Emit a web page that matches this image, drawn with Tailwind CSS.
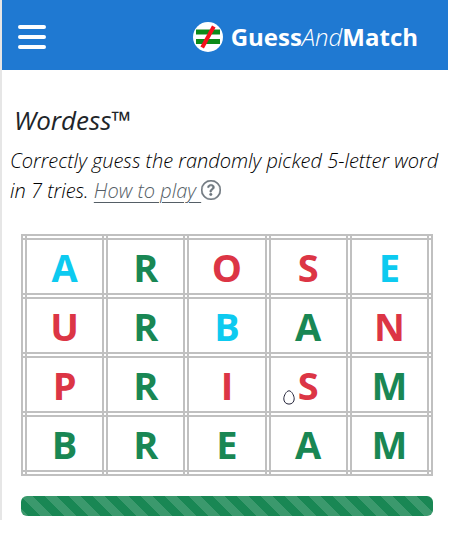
<!DOCTYPE html>
<html lang="en">
<head>
    <meta charset="UTF-8">
    <meta name="viewport" content="width=device-width, initial-scale=1.0">
    <title>Wordess - GuessAndMatch</title>
    <script src="https://cdn.jsdelivr.net/npm/@tailwindcss/browser@4"></script>
</head>
<body class="bg-white font-['Open_Sans','Noto_Sans',sans-serif] text-[#212529]">

    <div class="border-l-2 border-[#e6e6e6] mr-px pb-1">

        <!-- Header -->
        <header class="bg-[#1f79d2] h-[70px] flex items-center justify-between pl-4 pr-[30px] pt-1">
            <button type="button" aria-label="Menu" class="text-white">
                <svg class="w-7 h-6" viewBox="0 0 28 24" fill="none" stroke="currentColor" stroke-width="4" stroke-linecap="round">
                    <path d="M2 2h24M2 12h24M2 22h24"/>
                </svg>
            </button>
            <a href="#" class="flex items-center gap-2 text-white text-2xl font-bold whitespace-nowrap">
                <svg class="w-[30px] h-[30px]" viewBox="0 0 30 30">
                    <circle cx="15" cy="15" r="15" fill="#fff"/>
                    <path d="M3 10h24M3 19.5h24" stroke="#0c8a18" stroke-width="5"/>
                    <path d="M20.8 4.5L9.2 25.5" stroke="#f5101c" stroke-width="4"/>
                </svg>
                <span>Guess<i class="font-light">And</i>Match</span>
            </a>
        </header>

        <!-- Intro -->
        <section class="pt-8 pl-2 italic">
            <h1 class="text-[26px] leading-9 px-1">Wordess™</h1>
            <p class="text-xl font-light text-black leading-[30px] mt-2 pr-2">
                Correctly guess the randomly picked 5-letter word in 7 tries.
                <a href="#" class="text-[#555e66] underline underline-offset-4 decoration-1">How to play </a>
                <svg class="inline w-5 h-5 align-[-2px] text-[#6c757d]" viewBox="0 0 16 16" fill="currentColor">
                    <path d="M8 15A7 7 0 1 1 8 1a7 7 0 0 1 0 14m0 1A8 8 0 1 0 8 0a8 8 0 0 0 0 16" stroke="currentColor" stroke-width=".4"/>
                    <path stroke="currentColor" stroke-width=".5" d="M5.255 5.786a.237.237 0 0 0 .241.247h.825c.138 0 .248-.113.266-.25.09-.656.54-1.134 1.342-1.134.686 0 1.314.343 1.314 1.168 0 .635-.374.927-.965 1.371-.673.489-1.206 1.06-1.168 1.987l.003.217a.25.25 0 0 0 .25.246h.811a.25.25 0 0 0 .25-.25v-.105c0-.718.273-.927 1.01-1.486.609-.463 1.244-.977 1.244-2.056 0-1.511-1.276-2.241-2.673-2.241-1.267 0-2.655.59-2.75 2.286m1.557 5.763c0 .533.425.927 1.01.927.609 0 1.028-.394 1.028-.927 0-.552-.42-.94-1.029-.94-.584 0-1.009.388-1.009.94"/>
                </svg>
            </p>
        </section>

        <!-- Guesses -->
        <main class="pl-[19px] pr-[15px] mt-7">
            <table class="w-full table-fixed border-collapse text-center text-[38px] leading-10 font-bold [&_td]:border-6 [&_td]:border-double [&_td]:border-[#c0c0c0] [&_td]:h-[59px] [&_td]:p-0">
                <tbody>
                    <tr>
                        <td class="text-[#0dcaf0]">A</td>
                        <td class="text-[#198754]">R</td>
                        <td class="text-[#dc3545]">O</td>
                        <td class="text-[#dc3545]">S</td>
                        <td class="text-[#0dcaf0]">E</td>
                    </tr>
                    <tr>
                        <td class="text-[#dc3545]">U</td>
                        <td class="text-[#198754]">R</td>
                        <td class="text-[#0dcaf0]">B</td>
                        <td class="text-[#198754]">A</td>
                        <td class="text-[#dc3545]">N</td>
                    </tr>
                    <tr>
                        <td class="text-[#dc3545]">P</td>
                        <td class="text-[#198754]">R</td>
                        <td class="text-[#dc3545]">I</td>
                        <td class="text-[#dc3545] relative">S
                            <svg class="absolute left-3 bottom-1.5 w-3 h-[15px]" viewBox="0 0 12 15" fill="#fff" stroke="#222238">
                                <path d="M6 .8C3.5.8.8 5.4.8 8.9c0 3 2.2 5.2 5.2 5.2s5.2-2.2 5.2-5.2C11.2 5.4 8.5.8 6 .8z"/>
                            </svg>
                        </td>
                        <td class="text-[#198754]">M</td>
                    </tr>
                    <tr>
                        <td class="text-[#198754]">B</td>
                        <td class="text-[#198754]">R</td>
                        <td class="text-[#198754]">E</td>
                        <td class="text-[#198754]">A</td>
                        <td class="text-[#198754]">M</td>
                    </tr>
                </tbody>
            </table>

            <!-- Progress -->
            <div role="progressbar" aria-label="Progress" class="mt-5 h-5 rounded-md bg-[#198754] bg-[linear-gradient(45deg,rgba(255,255,255,.15)_25%,transparent_25%,transparent_50%,rgba(255,255,255,.15)_50%,rgba(255,255,255,.15)_75%,transparent_75%,transparent)] bg-[length:24px_24px]"></div>
        </main>
    </div>

</body>
</html>
